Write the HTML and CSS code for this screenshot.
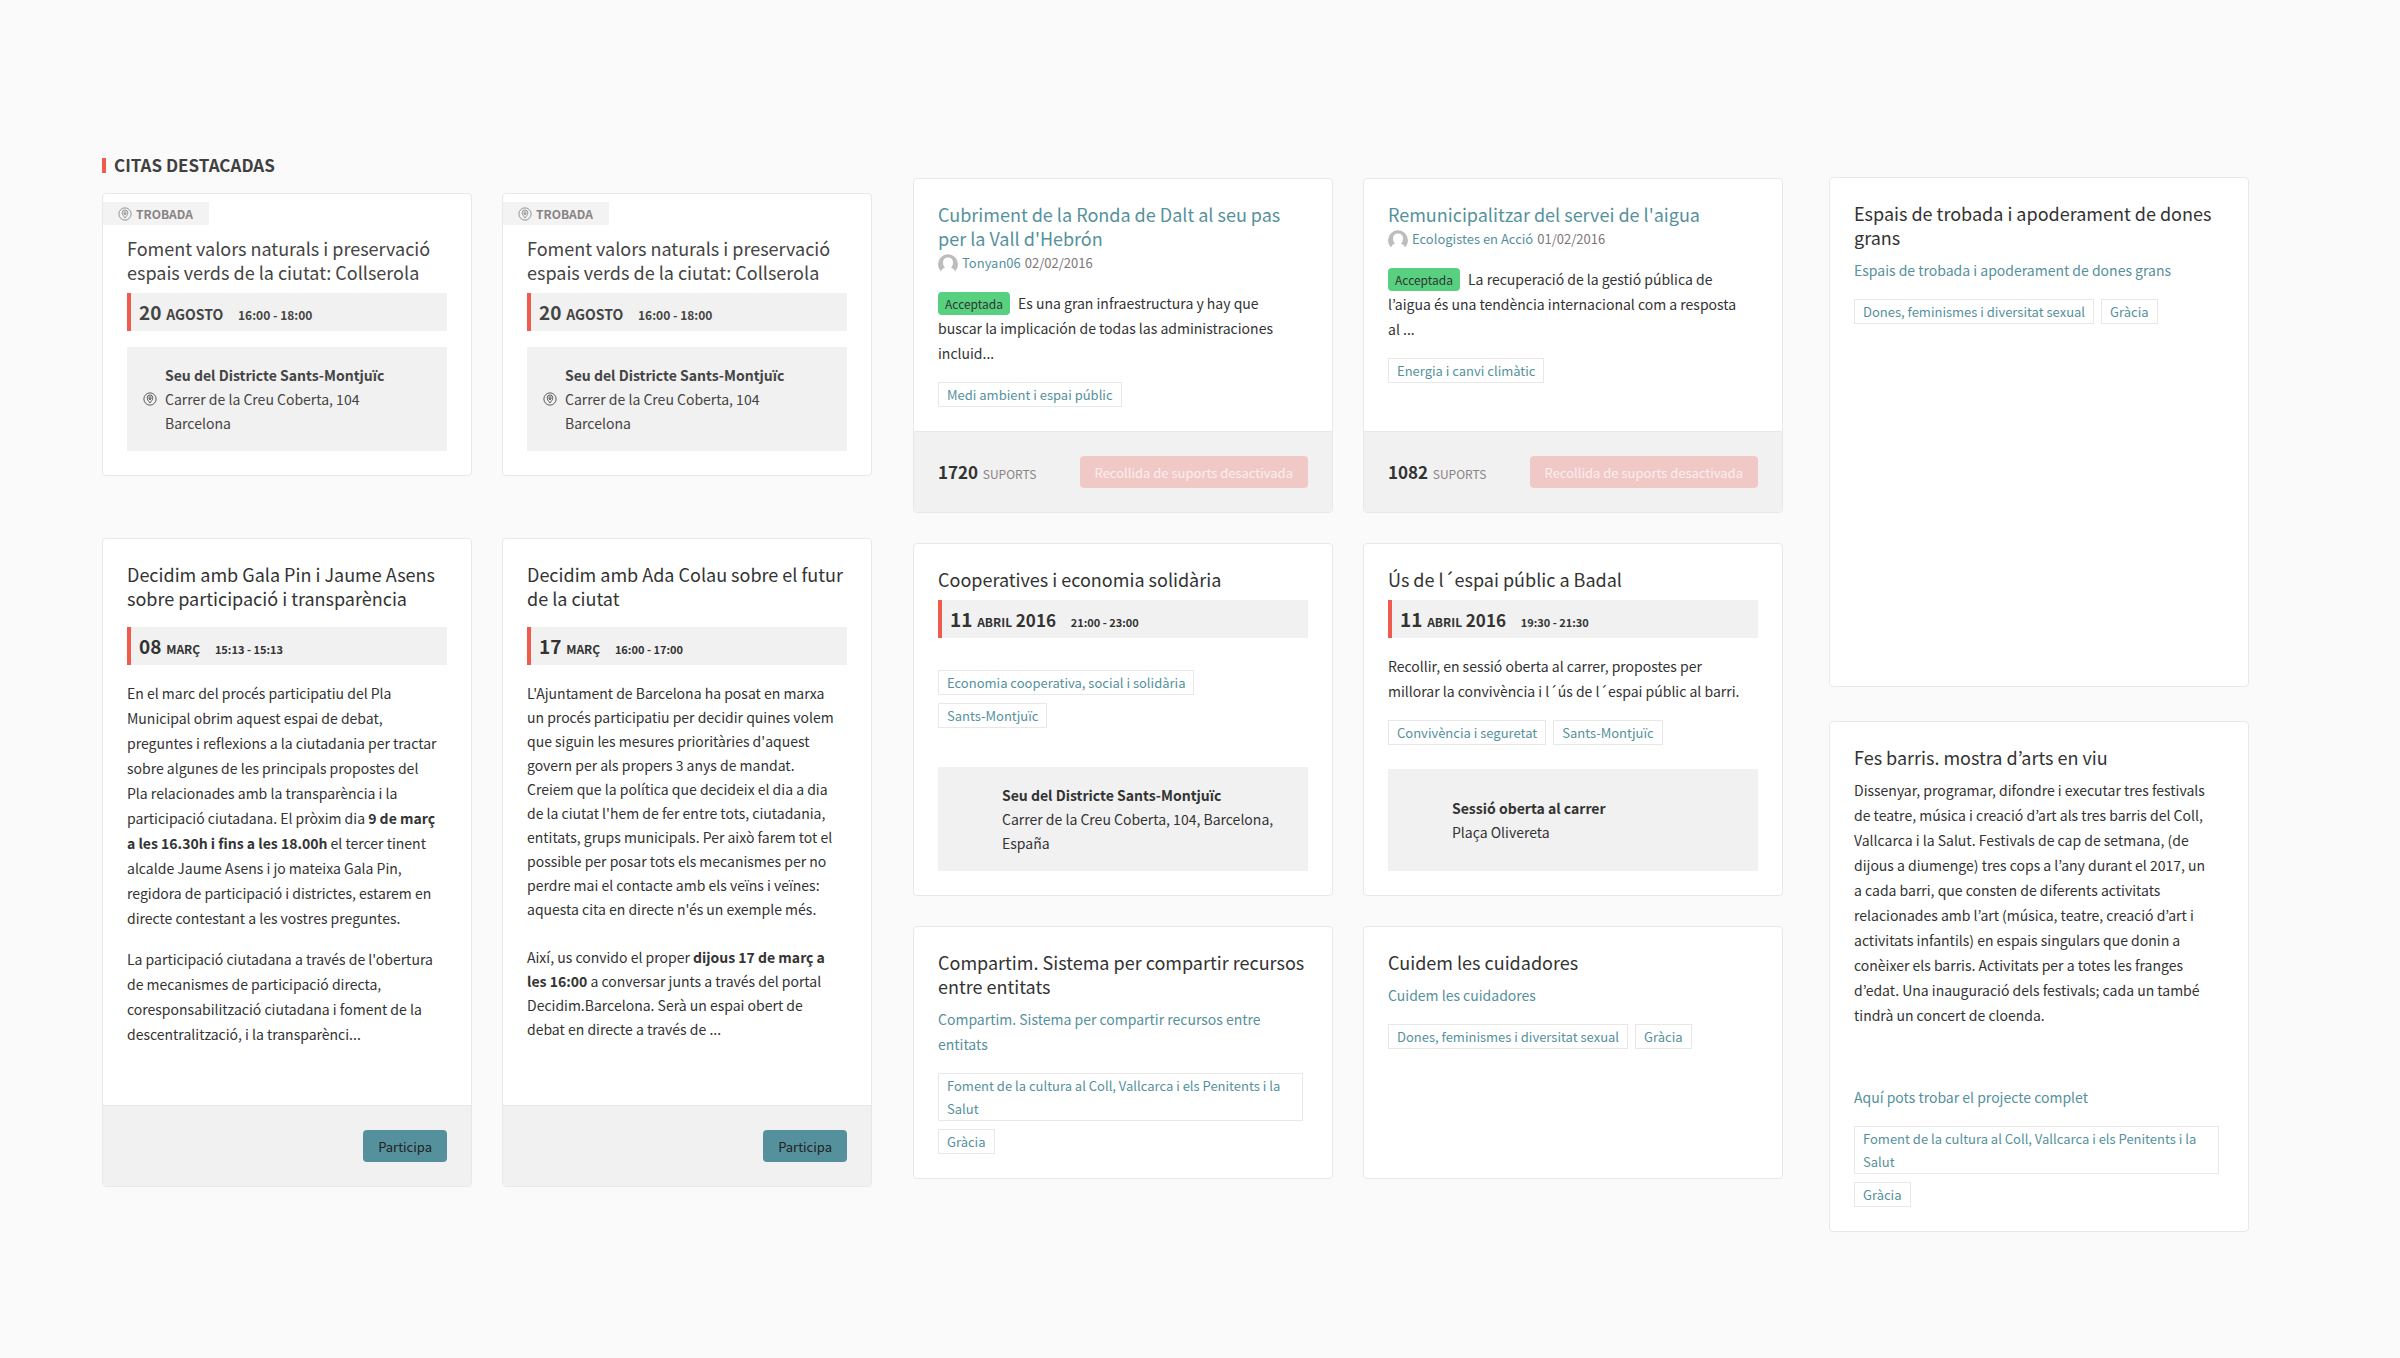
FILE: index.html
```
<!DOCTYPE html>
<html lang="ca">
<head>
    <meta charset="UTF-8">
    <meta name="viewport" content="width=device-width, initial-scale=1.0">
    <title>Decidim Barcelona</title>
    <link rel="stylesheet" href="styles.css">
</head>
<body>

    <!-- Shared icons -->
    <svg class="sprite" aria-hidden="true">
        <symbol id="icon-meeting" viewBox="0 0 16 16">
            <circle cx="8" cy="8" r="7" fill="none" stroke="currentColor" stroke-width="1"/>
            <path d="M8 12.500C6.500 10.500 4.800 8.700 4.800 6.600a3.200 3.200 0 0 1 6.400 0C11.200 8.700 9.500 10.500 8 12.500z" fill="none" stroke="currentColor" stroke-width="1"/>
            <path d="M6.300 5.800h3.400M6.300 7.200h3.400M7 8.600h2" stroke="currentColor" stroke-width="1"/>
        </symbol>
        <symbol id="icon-avatar" viewBox="0 0 20 18">
            <path d="M3 17.500A10 10 0 1 1 17 17.500C16.500 15.500 15 14.500 13 13.800C14.200 12.500 15 10.800 15 8.500C15 5.500 13 3.600 10 3.600S5 5.500 5 8.500C5 10.800 5.800 12.500 7 13.800C5 14.500 3.500 15.500 3 17.500z" fill="#bdbdbd"/>
        </symbol>
    </svg>

    <main class="page">

        <!-- Meetings -->
        <section class="column">
            <h2 class="section-heading">CITAS DESTACADAS</h2>
            <div class="row row-featured">
                <article class="card card-featured">
                    <div class="card-label"><svg class="icon"><use href="#icon-meeting"/></svg>TROBADA</div>
                    <div class="card-content">
                        <h3 class="card-title">Foment valors naturals i preservació espais verds de la ciutat: Collserola</h3>
                        <div class="card-date"><span class="day">20</span> <span class="month">AGOSTO</span> <span class="time">16:00 - 18:00</span></div>
                        <div class="card-location">
                            <svg class="icon"><use href="#icon-meeting"/></svg>
                            <address><strong>Seu del Districte Sants-Montjuïc</strong><br>Carrer de la Creu Coberta, 104<br>Barcelona</address>
                        </div>
                    </div>
                </article>
                <article class="card card-featured">
                    <div class="card-label"><svg class="icon"><use href="#icon-meeting"/></svg>TROBADA</div>
                    <div class="card-content">
                        <h3 class="card-title">Foment valors naturals i preservació espais verds de la ciutat: Collserola</h3>
                        <div class="card-date"><span class="day">20</span> <span class="month">AGOSTO</span> <span class="time">16:00 - 18:00</span></div>
                        <div class="card-location">
                            <svg class="icon"><use href="#icon-meeting"/></svg>
                            <address><strong>Seu del Districte Sants-Montjuïc</strong><br>Carrer de la Creu Coberta, 104<br>Barcelona</address>
                        </div>
                    </div>
                </article>
            </div>

            <div class="row">
                <article class="card card-debate">
                    <div class="card-content">
                        <h3 class="card-title">Decidim amb Gala Pin i Jaume Asens sobre participació i transparència</h3>
                        <div class="card-date"><span class="day">08</span> <span class="month">MARÇ</span> <span class="time">15:13 - 15:13</span></div>
                        <p>En el marc del procés participatiu del Pla Municipal obrim aquest espai de debat, preguntes i reflexions a la ciutadania per tractar sobre algunes de les principals propostes del<br>Pla relacionades amb la transparència i la participació ciutadana. El pròxim dia <strong>9 de març<br>a les 16.30h i fins a les 18.00h</strong> el tercer tinent alcalde Jaume Asens i jo mateixa Gala Pin, regidora de participació i districtes, estarem en directe contestant a les vostres preguntes.</p>
                        <p>La participació ciutadana a través de l'obertura de mecanismes de participació directa, coresponsabilització ciutadana i foment de la descentralització, i la transparènci...</p>
                    </div>
                    <div class="card-footer">
                        <button type="button" class="button">Participa</button>
                    </div>
                </article>
                <article class="card card-debate">
                    <div class="card-content">
                        <h3 class="card-title">Decidim amb Ada Colau sobre el futur de la ciutat</h3>
                        <div class="card-date"><span class="day">17</span> <span class="month">MARÇ</span> <span class="time">16:00 - 17:00</span></div>
                        <p class="compact">L'Ajuntament de Barcelona ha posat en marxa<br>un procés participatiu per decidir quines volem<br>que siguin les mesures prioritàries d'aquest<br>govern per als propers 3 anys de mandat.<br>Creiem que la política que decideix el dia a dia<br>de la ciutat l'hem de fer entre tots, ciutadania,<br>entitats, grups municipals. Per això farem tot el<br>possible per posar tots els mecanismes per no<br>perdre mai el contacte amb els veïns i veïnes:<br>aquesta cita en directe n'és un exemple més.<br><br>Així, us convido el proper <strong>dijous 17 de març a<br>les 16:00</strong> a conversar junts a través del portal<br>Decidim.Barcelona. Serà un espai obert de<br>debat en directe a través de ...</p>
                    </div>
                    <div class="card-footer">
                        <button type="button" class="button">Participa</button>
                    </div>
                </article>
            </div>
        </section>

        <!-- Proposals and meetings -->
        <section class="column column-main">
            <div class="row">
                <article class="card">
                    <div class="card-content">
                        <h3 class="card-title"><a href="#">Cubriment de la Ronda de Dalt al seu pas per la Vall d'Hebrón</a></h3>
                        <div class="author"><svg class="avatar"><use href="#icon-avatar"/></svg><a href="#">Tonyan06</a> 02/02/2016</div>
                        <p><span class="status">Acceptada</span>Es una gran infraestructura y hay que<br>buscar la implicación de todas las administraciones<br>incluid...</p>
                        <ul class="tags">
                            <li><a href="#">Medi ambient i espai públic</a></li>
                        </ul>
                    </div>
                    <div class="card-footer">
                        <div class="supports"><strong>1720</strong> SUPORTS</div>
                        <button type="button" class="button button-disabled" disabled>Recollida de suports desactivada</button>
                    </div>
                </article>
                <article class="card">
                    <div class="card-content">
                        <h3 class="card-title"><a href="#">Remunicipalitzar del servei de l'aigua</a></h3>
                        <div class="author"><svg class="avatar"><use href="#icon-avatar"/></svg><a href="#">Ecologistes en Acció</a> 01/02/2016</div>
                        <p><span class="status">Acceptada</span>La recuperació de la gestió pública de<br>l’aigua és una tendència internacional com a resposta<br>al ...</p>
                        <ul class="tags">
                            <li><a href="#">Energia i canvi climàtic</a></li>
                        </ul>
                    </div>
                    <div class="card-footer">
                        <div class="supports"><strong>1082</strong> SUPORTS</div>
                        <button type="button" class="button button-disabled" disabled>Recollida de suports desactivada</button>
                    </div>
                </article>
            </div>

            <div class="row">
                <article class="card card-meeting">
                    <div class="card-content">
                        <h3 class="card-title">Cooperatives i economia solidària</h3>
                        <div class="card-date"><span class="day">11</span> <span class="month">ABRIL</span> <span class="year">2016</span> <span class="time">21:00 - 23:00</span></div>
                        <ul class="tags tags-alone">
                            <li><a href="#">Economia cooperativa, social i solidària</a></li>
                            <li><a href="#">Sants-Montjuïc</a></li>
                        </ul>
                        <div class="card-location">
                            <address><strong>Seu del Districte Sants-Montjuïc</strong><br>Carrer de la Creu Coberta, 104, Barcelona, España</address>
                        </div>
                    </div>
                </article>
                <article class="card card-meeting">
                    <div class="card-content">
                        <h3 class="card-title">Ús de l´espai públic a Badal</h3>
                        <div class="card-date"><span class="day">11</span> <span class="month">ABRIL</span> <span class="year">2016</span> <span class="time">19:30 - 21:30</span></div>
                        <p>Recollir, en sessió oberta al carrer, propostes per<br>millorar la convivència i l´ús de l´espai públic al barri.</p>
                        <ul class="tags">
                            <li><a href="#">Convivència i seguretat</a></li>
                            <li><a href="#">Sants-Montjuïc</a></li>
                        </ul>
                        <div class="card-location">
                            <address><strong>Sessió oberta al carrer</strong><br>Plaça Olivereta</address>
                        </div>
                    </div>
                </article>
            </div>

            <div class="row">
                <article class="card card-project">
                    <div class="card-content">
                        <h3 class="card-title">Compartim. Sistema per compartir recursos entre entitats</h3>
                        <p><a href="#">Compartim. Sistema per compartir recursos entre entitats</a></p>
                        <ul class="tags">
                            <li><a href="#">Foment de la cultura al Coll, Vallcarca i els Penitents i la Salut</a></li>
                            <li><a href="#">Gràcia</a></li>
                        </ul>
                    </div>
                </article>
                <article class="card card-project">
                    <div class="card-content">
                        <h3 class="card-title">Cuidem les cuidadores</h3>
                        <p><a href="#">Cuidem les cuidadores</a></p>
                        <ul class="tags">
                            <li><a href="#">Dones, feminismes i diversitat sexual</a></li>
                            <li><a href="#">Gràcia</a></li>
                        </ul>
                    </div>
                </article>
            </div>
        </section>

        <!-- Projects -->
        <section class="column column-side">
            <article class="card card-project card-tall">
                <div class="card-content">
                    <h3 class="card-title">Espais de trobada i apoderament de dones grans</h3>
                    <p><a href="#">Espais de trobada i apoderament de dones grans</a></p>
                    <ul class="tags">
                        <li><a href="#">Dones, feminismes i diversitat sexual</a></li>
                        <li><a href="#">Gràcia</a></li>
                    </ul>
                </div>
            </article>
            <article class="card card-project">
                <div class="card-content">
                    <h3 class="card-title">Fes barris. mostra d’arts en viu</h3>
                    <p>Dissenyar, programar, difondre i executar tres festivals<br>de teatre, música i creació d’art als tres barris del Coll,<br>Vallcarca i la Salut. Festivals de cap de setmana, (de<br>dijous a diumenge) tres cops a l’any durant el 2017, un<br>a cada barri, que consten de diferents activitats<br>relacionades amb l’art (música, teatre, creació d’art i<br>activitats infantils) en espais singulars que donin a<br>conèixer els barris. Activitats per a totes les franges<br>d’edat. Una inauguració dels festivals; cada un també<br>tindrà un concert de cloenda.</p>
                    <p class="more"><a href="#">Aquí pots trobar el projecte complet</a></p>
                    <ul class="tags">
                        <li><a href="#">Foment de la cultura al Coll, Vallcarca i els Penitents i la Salut</a></li>
                        <li><a href="#">Gràcia</a></li>
                    </ul>
                </div>
            </article>
        </section>

    </main>

</body>
</html>
```
FILE: styles.css
```
* {
    box-sizing: border-box;
}

body {
    font-family: 'Noto Sans CJK KR', 'Noto Sans', sans-serif;
    font-size: 14px;
    line-height: 25px;
    margin: 0;
    background: #fafafa;
    color: #333;
}

a {
    color: #55919c;
    text-decoration: none;
}

a:hover {
    text-decoration: underline;
}

.sprite {
    position: absolute;
    width: 0;
    height: 0;
}

.page {
    display: grid;
    grid-template-columns: 770fr 870fr 425fr;
    gap: 41px;
    align-items: start;
    padding: 153px 151px 100px 102px;
}

.column-main {
    padding-top: 25px;
}

.column-side {
    padding-top: 24px;
    padding-left: 5px;
}

.section-heading {
    display: flex;
    align-items: center;
    gap: 8px;
    margin: 0 0 16px;
    color: #404040;
    font-size: 17px;
    line-height: 24px;
}

.section-heading::before {
    content: '';
    width: 4px;
    height: 15px;
    background: #ef5b4d;
}

.row {
    display: grid;
    grid-template-columns: 1fr 1fr;
    gap: 30px;
    margin-bottom: 30px;
}

.row-featured {
    margin-bottom: 62px;
}

/* Cards */
.card {
    display: flex;
    flex-direction: column;
    background: #fff;
    border: 1px solid #e8e8e8;
    border-radius: 4px;
}

.card-content {
    display: flex;
    flex-direction: column;
    flex: 1;
    padding: 23px 24px 24px;
}

.card-title {
    margin: 0 0 1px;
    font-size: 18px;
    font-weight: 400;
    line-height: 24px;
}

.card-content p {
    margin: 16px 0 0;
}

.card-content .compact {
    line-height: 24px;
}

.card-label {
    display: flex;
    align-items: center;
    align-self: flex-start;
    gap: 4px;
    margin-top: 8px;
    padding: 0 16px 0 15px;
    background: #f3f3f4;
    color: #8a8385;
    font-size: 12px;
    font-weight: 700;
    line-height: 23px;
}

.icon {
    width: 14px;
    height: 14px;
    flex: none;
}

.card-date {
    height: 38px;
    margin-top: 8px;
    padding-left: 8px;
    border-left: 4px solid #ef5b4d;
    background: #f1f1f1;
    font-size: 12px;
    font-weight: 600;
    line-height: 38px;
}

.day {
    margin-right: 2px;
    font-size: 19px;
}

.year {
    margin-left: 1px;
    font-size: 17px;
}

.time {
    margin-left: 12px;
    font-size: 11px;
}

.card-location {
    display: flex;
    align-items: center;
    margin-top: 24px;
    padding: 16px 16px 16px 64px;
    background: #f1f1f1;
    line-height: 24px;
}

.card-location address {
    font-style: normal;
}

.card-footer {
    display: flex;
    align-items: center;
    justify-content: flex-end;
    padding: 24px;
    background: #f1f1f1;
    border-top: 1px solid #e8e8e8;
    border-radius: 0 0 4px 4px;
}

.button {
    height: 32px;
    padding: 0 15px;
    border: 0;
    border-radius: 4px;
    background: #55919c;
    color: #222;
    font-family: inherit;
    font-size: 13px;
    cursor: pointer;
}

.button-disabled {
    background: #f0c9c7;
    color: #fbeeee;
    cursor: default;
}

.supports {
    margin-right: auto;
    color: #8a8385;
    font-size: 12px;
}

.supports strong {
    margin-right: 2px;
    color: #333;
    font-size: 17px;
}

.author {
    display: flex;
    align-items: center;
    gap: 4px;
    color: #7d7678;
    font-size: 13px;
    line-height: 24px;
}

.avatar {
    width: 20px;
    height: 18px;
}

.status {
    display: inline-block;
    margin-right: 8px;
    padding: 0 7px;
    border-radius: 4px;
    background: #57d17f;
    font-size: 12px;
    line-height: 23px;
}

/* Tags */
.tags {
    display: flex;
    flex-wrap: wrap;
    gap: 8px 7px;
    margin: 16px 0 0;
    padding: 0 5px 0 0;
    list-style: none;
}

.tags a {
    display: block;
    padding: 0 8px;
    border: 1px solid #e8e8e8;
    font-size: 13px;
    line-height: 23px;
}

.tags-alone {
    margin: 32px 0 15px;
}

/* Card variants */
.card-featured {
    color: #444;
}

.card-featured .card-content {
    padding-top: 11px;
}

.card-featured .month {
    font-size: 14px;
}

.card-featured .time {
    font-size: 12px;
}

.card-featured .card-location {
    gap: 8px;
    margin-top: 16px;
    padding-left: 16px;
}

.card-debate .card-date {
    margin-top: 16px;
}

.card-debate .card-content {
    padding-bottom: 58px;
}

.card-meeting .card-location {
    flex: 1;
}

.card-project p {
    margin-top: 8px;
}

.card-project .more {
    margin-top: 57px;
}

.card-tall {
    min-height: 510px;
    margin-bottom: 34px;
}
```
